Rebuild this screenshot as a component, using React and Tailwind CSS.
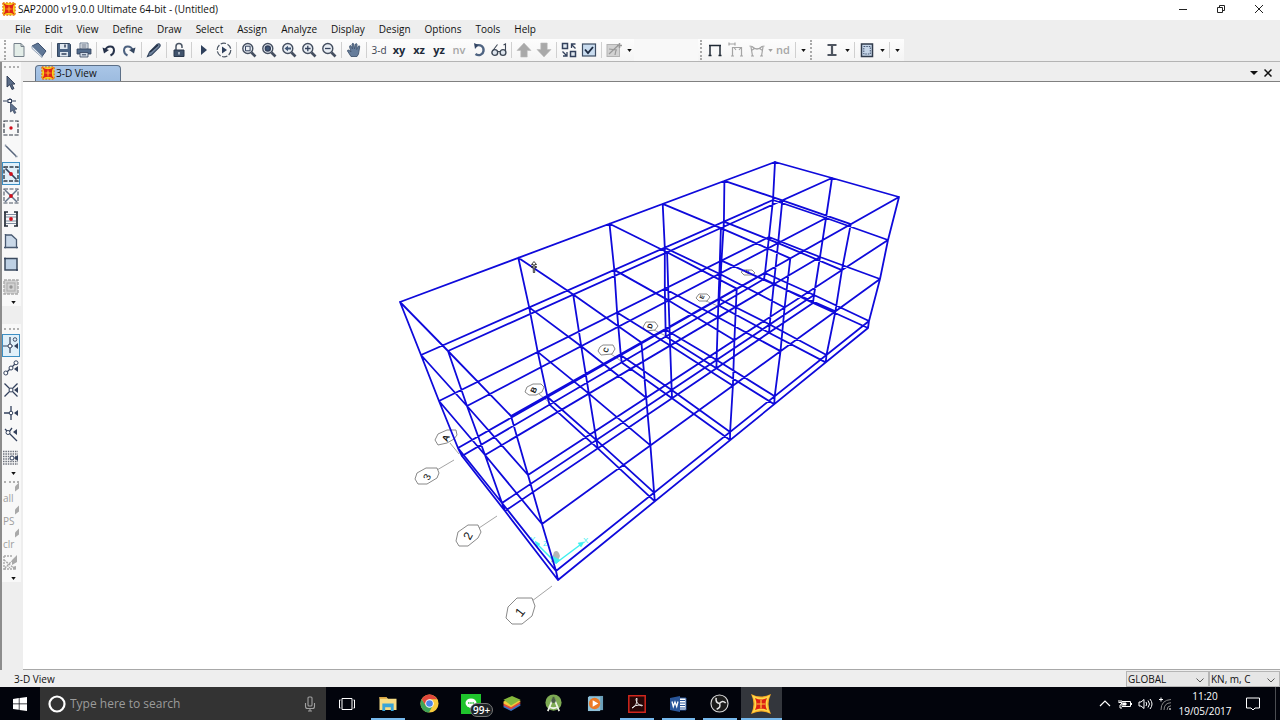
import React from "react";

const INK = "#33415c";

/* ---------- logos and icons ---------- */

function Logo({ className = "size-4" }) {
  return (
    <svg viewBox="0 0 16 16" className={className} aria-hidden="true">
      <rect x="1" y="1" width="14" height="14" fill="#f6d21c" />
      <path d="M1 1h14v14H1z" fill="none" stroke="#e8701a" strokeWidth="1.4" strokeDasharray="2 1.6" />
      <path d="M1.500 1.500Q8 6 14.500 1.500Q10 8 14.500 14.500Q8 10 1.500 14.500Q6 8 1.500 1.500Z" fill="#e02318" />
      <path d="M8 5v6M5 8h6" stroke="#ffb020" strokeWidth="1.300" />
    </svg>
  );
}

function BigLogo() {
  return (
    <svg viewBox="0 0 20 20" className="size-5" aria-hidden="true">
      <path d="M0 0Q10 5 20 0Q15 10 20 20Q10 15 0 20Q5 10 0 0Z" fill="#f7a823" />
      <path d="M1 1Q10 6.500 19 1Q13.500 10 19 19Q10 13.500 1 19Q6.500 10 1 1Z" fill="#ffd84a" />
      <path d="M4 4Q10 7 16 4Q13 10 16 16Q10 13 4 16Q7 10 4 4Z" fill="#dc2014" />
      <path d="M10 6v8M6 10h8" stroke="#ffc53a" strokeWidth="1.200" />
    </svg>
  );
}

function Svg({ children, size = 16 }) {
  return (
    <svg viewBox="0 0 16 16" width={size} height={size} className="shrink-0" fill="none" stroke={INK} strokeWidth="1.400" aria-hidden="true">
      {children}
    </svg>
  );
}

function Magnifier({ children }) {
  return (
    <Svg>
      <circle cx="6.800" cy="6.500" r="5" fill="#e8edf3" stroke="#454f60" />
      <path d="M10.500 10.500L14.500 14.500" strokeWidth="2.600" stroke="#454f60" />
      {children}
    </Svg>
  );
}

const Word = ({ children, cls }) => (
  <span className={cls}>{children}</span>
);

const Icons = {
  newFile: (
    <Svg><path d="M3 1.500h7l3 3v10H3z" fill="#e3ede8" stroke="#75808a" strokeWidth="1" /><path d="M10 1.500v3h3" stroke="#75808a" strokeWidth="1" /></Svg>
  ),
  open: (
    <Svg><path d="M1 4l6-3 8 8-4 5.500z" fill="#5f7796" stroke="#3d5170" strokeWidth="1" /><path d="M1 4l10 10v1.500L1 6.500z" fill="#e8eef5" stroke="#7f92aa" strokeWidth=".8" /></Svg>
  ),
  save: (
    <Svg><path d="M1.500 1.500h12l1 1v12h-13z" fill="#4a6384" stroke="#34475f" strokeWidth="1" /><path d="M4 2h7.500v5H4zM4 10h8v4.500H4z" fill="#dfe7ef" stroke="none" /><path d="M9 2.500v3M5.500 12h5" strokeWidth="1.500" /></Svg>
  ),
  print: (
    <Svg><path d="M4 1h8v6H4z" fill="#eef2f6" stroke="#6c7c90" strokeWidth="1" /><path d="M5.500 3h5M5.500 5h5" strokeWidth=".8" /><path d="M1 7h14v5H1z" fill="#526b8b" strokeWidth=".8" /><path d="M4 10.500h8v4.500H4z" fill="#cfd9e4" strokeWidth=".8" /><path d="M6 12.800h4" strokeWidth="1" /></Svg>
  ),
  undo: (
    <Svg><path d="M4 8.500C6 3 13 3 13 8.500c0 2.500-1.500 4-3.500 5" stroke="#26324a" strokeWidth="2" /><path d="M1.500 5.500l1.500 6 5-3.500z" fill="#26324a" stroke="none" /></Svg>
  ),
  redo: (
    <Svg><path d="M12 8.500C10 3 3 3 3 8.500c0 2.500 1.500 4 3.500 5" stroke="#4c617f" strokeWidth="2" /><path d="M14.500 5.500l-1.500 6-5-3.500z" fill="#34465f" stroke="none" /></Svg>
  ),
  pencil: (
    <Svg><path d="M1.500 14.500l2-4.500L11 2.500q2-1.500 3 0 .8 1.200-.8 2.800L5.500 13z" fill="#71849e" stroke="#34465f" strokeWidth="1.100" /><path d="M4 10l8-7" stroke="#202c40" strokeWidth="1.200" /></Svg>
  ),
  lock: (
    <Svg><path d="M5 8V4.500a3 3 0 0 1 6 0V6" stroke="#4b5665" strokeWidth="1.500" /><path d="M3 8h10v6.500H3z" fill="#41536c" stroke="#2b394d" strokeWidth="1" /><path d="M8 10v2.500" stroke="#d5dde8" /></Svg>
  ),
  play: <Svg><path d="M5 3l6 5-6 5z" fill="#2f405c" stroke="none" /></Svg>,
  runAll: (
    <Svg><circle cx="8" cy="8" r="6.800" strokeDasharray="5.500 1.600" stroke="#4c5664" strokeWidth="1.200" /><path d="M6 4.500l5 3.500-5 3.500z" fill="#2f405c" stroke="none" /></Svg>
  ),
  zoomBox: <Magnifier><path d="M4.500 4.200h4.600v4.600H4.500z" strokeWidth="1" /></Magnifier>,
  zoomFull: <Magnifier><circle cx="6.800" cy="6.500" r="2.500" fill="#3f5676" /></Magnifier>,
  zoomPrev: <Magnifier><path d="M3.500 6.500L7 3.700v1.800h3v2H7v1.800z" fill="#3f5676" stroke="none" /></Magnifier>,
  zoomIn: <Magnifier><path d="M4 6.500h5.600M6.800 3.700v5.600" strokeWidth="1.300" /></Magnifier>,
  zoomOut: <Magnifier><path d="M4 6.500h5.600" strokeWidth="1.300" /></Magnifier>,
  hand: (
    <Svg><path d="M5 14.500L1.500 9q0-1.500 1.500-.8L5 10 3.500 4.500q.3-1.500 1.500-.5L6.500 7 6 2q1-1.500 1.800 0L8.500 7 9.500 2q1.200-1 1.500.5L10.700 7.500 12.500 4q1.300-.6 1.200.8L12.500 12l-1.500 2.500z" fill="#667d9b" stroke="#43566f" strokeWidth=".9" /></Svg>
  ),
  rotate: (
    <Svg><path d="M5 3.500C10 2 13 5 12.500 9c-.5 3.500-4.500 5.500-8 3" stroke="#4f6482" strokeWidth="2.400" /><path d="M3 1l4.500 2-3.500 4z" fill="#334664" stroke="none" /></Svg>
  ),
  glasses: (
    <Svg><circle cx="3.800" cy="10.500" r="2.900" fill="#dfe6ee" stroke="#3e4856" /><circle cx="12" cy="10.500" r="2.900" fill="#dfe6ee" stroke="#3e4856" /><path d="M6.500 9.500h3M1.500 9L6.500 2.500M14.500 9V2l-2 1" stroke="#3e4856" strokeWidth="1.100" /></Svg>
  ),
  up: <Svg><path d="M8 1l7 7.500h-3.800V15H4.800V8.500H1z" fill="#a9a9a9" stroke="#b8b8b8" strokeWidth=".6" /></Svg>,
  down: <Svg><path d="M8 15L1 7.500h3.800V1h6.400v6.500H15z" fill="#a9a9a9" stroke="#b8b8b8" strokeWidth=".6" /></Svg>,
  shrink: (
    <Svg><path d="M1.500 1.500h5v5h-5zM9.500 9.500h5v5h-5z" fill="#dfe7ef" strokeWidth="1.500" /><path d="M14.500 6.500l-4-4M10.500 6V2H14.500M1.500 9.500l4 4M6 10v4H2" strokeWidth="1.300" /></Svg>
  ),
  checked: (
    <Svg><rect x="1.500" y="2" width="13" height="12" fill="#c9dcef" stroke="#3d4d63" strokeWidth="1.200" /><path d="M4 7.500l3 3.500 5-6" stroke="#1e2b42" strokeWidth="1.900" /></Svg>
  ),
  named: (
    <Svg><rect x="1" y="2.500" width="12.500" height="12" fill="#d2d2d2" stroke="#b3b3b3" strokeWidth="1" /><path d="M3 12l9-8.500M3 7l8 1M9 13l1-5" stroke="#989898" strokeWidth="1.200" /><path d="M13.500 1v5M11 3.500h5" stroke="#989898" strokeWidth="1.500" /></Svg>
  ),
  frame: <Svg><path d="M3 13.500V3.500h10v10M1.500 13.500h3M11.500 13.500h3M2 3.500h12" stroke="#202a36" strokeWidth="1.500" /></Svg>,
  loads: <Svg><path d="M4.500 14V5.500h9V14M3 14h3M12 14h3M1 2h6M1 .5v3M7 .5v3M8 8l-2-2.500M11 8l2-2.500" stroke="#a4a4a4" strokeWidth="1.200" /></Svg>,
  bend: <Svg><path d="M3.500 14L2 5M12.500 14L14 5M2 14h3M11 14h3M.5 4l2.500.5q5 5 10 0l2.500-.5M2.500 8.500L6 6M13.500 8.500L10 6" stroke="#a4a4a4" strokeWidth="1.200" /></Svg>,
  section: <Svg><path d="M3.500 3h9M3.500 13h9M8 3v10" stroke="#4e5560" strokeWidth="2.200" /></Svg>,
  area: <Svg><rect x="2.500" y="2" width="11" height="12.500" fill="#c5d5e8" stroke="#303b4b" strokeWidth="1.500" /><rect x="4.800" y="4.500" width="6.500" height="7.500" stroke="#465874" strokeWidth="1" strokeDasharray="1.500 1" /></Svg>,
  arrow: <Svg><path d="M4 1v11l2.800-2.300L9 14.500l2-1-2.300-4.300L12 9z" fill="#5c6d88" stroke="#2b3850" strokeWidth=".9" /></Svg>,
  reshape: <Svg><path d="M0 3h13M7 0v5" strokeWidth="1.100" /><rect x="5" y="1.500" width="3.500" height="3" fill="#fff" strokeWidth="1" /><path d="M7.500 5v9l2.200-1.800 1.700 3.300 1.500-.8-1.700-3.200 2.800-.4z" fill="#60738f" strokeWidth=".7" /></Svg>,
  joint: <Svg><rect x="1" y="1" width="14" height="14" strokeDasharray="4 1.500" stroke="#333b46" strokeWidth="1.200" /><circle cx="8" cy="8" r="1.700" fill="#d0101d" stroke="none" /></Svg>,
  line: <Svg><path d="M3 3l10 10" stroke="#56647a" strokeWidth="1.500" /><path d="M2.500 1.500v2M12 13.500h2.500" stroke="#8a95a5" /></Svg>,
  quickLine: <Svg><rect x="1" y="1" width="14" height="14" strokeDasharray="4 1.500" stroke="#333b46" strokeWidth="1.400" /><path d="M2.500 2.500l11 11" strokeWidth="1.700" /><circle cx="8" cy="8" r="1.900" fill="#d0101d" stroke="none" /></Svg>,
  brace: <Svg><rect x="1" y="1" width="14" height="14" strokeDasharray="4 1.500" stroke="#4b5563" strokeWidth="1.100" /><path d="M2 2l12 12M14 2L2 14" stroke="#65748a" strokeWidth="1.500" /><circle cx="8" cy="8" r="1.900" fill="#d0101d" stroke="none" /></Svg>,
  secondary: <Svg><path d="M2 1v14M14 1v14M1 1h4M11 1h4M1 15h4M11 15h4" stroke="#252d38" strokeWidth="1.700" /><path d="M3 3.500h10M3 6h10M3 10h10M3 12.500h10" stroke="#7e8da0" strokeWidth="1.100" /><circle cx="8" cy="8" r="1.900" fill="#d0101d" stroke="none" /></Svg>,
  poly: <Svg><path d="M2.500 2h6l5 4.500v8h-11z" fill="#c9d8e8" stroke="#485970" strokeWidth="1.300" /><path d="M1 14.500h2M13 14.500h2M2.500 1v1" stroke="#485970" /></Svg>,
  rect: <Svg><rect x="2" y="2.500" width="12" height="11.500" fill="#bdd0e4" stroke="#3a495e" strokeWidth="1.500" /><path d="M1 2.500h2M13 14h2" /></Svg>,
  quickArea: <Svg><rect x="1" y="1" width="14" height="14" fill="#d2d2d2" stroke="#aaa" strokeDasharray="3 1" /><rect x="4" y="4" width="8" height="8" stroke="#aaa" strokeWidth="1" /><circle cx="8" cy="8" r="1.700" fill="#949494" stroke="none" /></Svg>,
  snapPoint: <Svg><path d="M7 0v16M0 9h10" strokeWidth="1.200" /><circle cx="12" cy="2.500" r="1.800" strokeWidth=".9" /><circle cx="7" cy="9" r="2" fill="#fff" strokeWidth="1" /><path d="M15 6v6l-4-3z" fill={INK} stroke="none" /></Svg>,
  snapMid: <Svg><path d="M3 13L13 3" strokeWidth="1.200" /><circle cx="2.800" cy="13" r="2" fill="#fff" strokeWidth="1" /><circle cx="8" cy="8" r="2" fill="#fff" strokeWidth="1" /><circle cx="13" cy="2.800" r="2" fill="#fff" strokeWidth="1" /><path d="M15 6v6l-4-3z" fill={INK} stroke="none" /></Svg>,
  snapCross: <Svg><path d="M1.500 1.500l13 13M14.500 1.500l-13 13" strokeWidth="1.300" /><circle cx="8" cy="8" r="2" fill="#fff" strokeWidth="1" /><path d="M15 5v6l-4-3z" fill={INK} stroke="none" /></Svg>,
  snapPerp: <Svg><path d="M8 1v14M1 8h9" strokeWidth="1.300" /><circle cx="8" cy="8" r="1.800" fill="#fff" strokeWidth="1" /><path d="M15 5v6l-4-3z" fill={INK} stroke="none" /></Svg>,
  snapLine: <Svg><path d="M2 2l12 12M6 5l3-4" strokeWidth="1.300" /><circle cx="5" cy="5.500" r="2" fill="#fff" strokeWidth="1" /><path d="M14 2v6l-4-3z" fill={INK} stroke="none" /></Svg>,
  snapGrid: <Svg><path d="M0 1.500h15M0 4h15M0 6.500h15M0 9h15M0 11.500h15M0 14h15" stroke="#6d727c" strokeWidth="1.400" strokeDasharray="1.500 .9" /><circle cx="9" cy="8" r="2" fill="#fff" strokeWidth="1" /><path d="M15 5v6l-4-3z" fill={INK} stroke="none" /></Svg>,
};

function Brush({ text }) {
  return (
    <span className="relative block h-4 w-4 text-left text-[10px] leading-6 text-[#9d9d9d]">
      {text}
      <svg viewBox="0 0 6 10" className="absolute -right-px -top-1 h-[11px] w-[6px]" aria-hidden="true">
        <path d="M1 4l4-4v6L1 9z" fill="#a9a9a9" />
      </svg>
    </span>
  );
}
const dashBrush = (
  <Svg><path d="M1 1h8M1 1v14M1 14h11M1 5l11 9M2 13L9 6M4 10l3 3" stroke="#a9a9a9" strokeDasharray="2 1" /><path d="M9 5l5-5v7l-5 3zM9 12l4-1v4z" fill="#a9a9a9" stroke="none" /></Svg>
);

/* ---------- tool bar parts ---------- */

function Tool({ label, children, width = "w-5" }) {
  return (
    <button type="button" aria-label={label} className={`${width} flex h-5 shrink-0 items-center justify-center`}>
      {children}
    </button>
  );
}
const Sep = () => <span className="mx-0.5 h-4 w-px shrink-0 bg-[#d0d0d0]" />;
function Caret({ label, dim, width = "w-2.5" }) {
  return (
    <button type="button" aria-label={label} className={`${width} flex h-5 shrink-0 items-center justify-center`}>
      <svg viewBox="0 0 6 4" className="h-[3px] w-[5px]" aria-hidden="true"><path d="M0 0h6L3 4z" fill={dim ? "#a0a0a0" : "#111"} /></svg>
    </button>
  );
}
const Grip = () => <span className="mx-0.5 h-5 w-0 shrink-0 border-l-2 border-dotted border-[#a9a9a9]" />;

const mainTools = [
  ["New model", Icons.newFile], ["Open", Icons.open], null,
  ["Save", Icons.save], ["Print", Icons.print], null,
  ["Undo", Icons.undo], ["Redo", Icons.redo], null,
  ["Refresh window", Icons.pencil], null,
  ["Lock model", Icons.lock], null,
  ["Run analysis", Icons.play], ["Model alive", Icons.runAll], null,
  ["Rubber band zoom", Icons.zoomBox], ["Restore full view", Icons.zoomFull], ["Previous zoom", Icons.zoomPrev],
  ["Zoom in", Icons.zoomIn], ["Zoom out", Icons.zoomOut], null,
  ["Pan", Icons.hand], null,
  ["3-d view", <Word cls="text-[10px] text-[#3c4450]">3-d</Word>],
  ["xy view", <Word cls="text-[11px] font-bold text-[#202a3a]">xy</Word>],
  ["xz view", <Word cls="text-[11px] font-bold text-[#202a3a]">xz</Word>],
  ["yz view", <Word cls="text-[11px] font-bold text-[#202a3a]">yz</Word>],
  ["nv view", <Word cls="text-[11px] font-semibold text-[#a6a6a6]">nv</Word>],
  ["Rotate 3D view", Icons.rotate], ["Perspective toggle", Icons.glasses], null,
  ["Move up", Icons.up], ["Move down", Icons.down], null,
  ["Object shrink", Icons.shrink], ["Display options", Icons.checked], null,
  ["Named display", Icons.named],
];

const drawTools = [
  ["Select", Icons.arrow], ["Reshape", Icons.reshape], ["Draw joint", Icons.joint], ["Draw frame", Icons.line],
  ["Quick draw frame", Icons.quickLine], ["Quick draw braces", Icons.brace], ["Quick draw secondary beams", Icons.secondary],
  ["Draw poly area", Icons.poly], ["Draw rectangular area", Icons.rect], ["Quick draw area", Icons.quickArea],
];
const snapTools = [
  ["Snap to points", Icons.snapPoint], ["Snap to midpoints", Icons.snapMid], ["Snap to intersections", Icons.snapCross],
  ["Snap perpendicular", Icons.snapPerp], ["Snap to lines", Icons.snapLine], ["Snap to grid", Icons.snapGrid],
];
const selectTools = [
  ["Select all", <Brush text="all" />], ["Previous selection", <Brush text="PS" />],
  ["Clear selection", <Brush text="clr" />], ["Intersecting line", dashBrush],
];

function SideGroup({ tools, active, height, pad = "pt-1" }) {
  return (
    <div className="flex flex-col bg-[#f8f8f8]">
      <span className="mx-0.5 mt-1 border-t-2 border-dotted border-[#b0b0b0]" />
      <div className={pad}>
        <div className={`${height} flex flex-col`}>
          {tools.map(([label, icon], i) => (
            <button
              key={label}
              type="button"
              aria-label={label}
              className={`flex w-[18px] flex-1 items-center justify-center border ${i === active ? "border-[#3c8fc4] bg-[#e0f0fa]" : "border-transparent"}`}
            >
              {icon}
            </button>
          ))}
        </div>
      </div>
      <button type="button" aria-label="More tools" className="flex h-2 items-center justify-center pl-1">
        <svg viewBox="0 0 6 4" className="h-[3px] w-[5px]" aria-hidden="true"><path d="M0 0h6L3 4z" fill="#111" /></svg>
      </button>
    </div>
  );
}

/* ---------- structural model ---------- */

// Screen positions of both end frames: [row][level], from base to roof.
const NEAR = [
  [[558, 580], [556, 571], [542, 524], [528, 475], [511, 416]],
  [[505, 511], [502, 503], [485, 455], [467, 406], [448, 351]],
  [[462, 456], [458, 448], [439, 401], [421, 355], [400, 302]],
];
const FAR = [
  [[868, 328], [869, 321], [880, 279], [888, 240], [899, 197]],
  [[813, 303], [814, 295], [820, 257], [826, 218], [832, 178]],
  [[764, 279], [765, 273], [769, 237], [773, 200], [775, 162]],
];
const DEPTH = [1, 0.95, 0.9];
const HEIGHT = [0, 0.05, 0.35, 0.67, 1];
const BAYS = [0, 0.454, 1.247, 2.305, 6.32, Infinity];

function node(bay, row, level) {
  const a = NEAR[row][level];
  const b = FAR[row][level];
  const o = BAYS[bay] * (DEPTH[row] + 0.115 * HEIGHT[level]);
  const s = o === Infinity ? 1 : o / (1 + o);
  return [a[0] + (b[0] - a[0]) * s, a[1] + (b[1] - a[1]) * s];
}

function framePath() {
  const parts = [];
  const seg = (p, q) => parts.push(`M${p[0].toFixed(1)} ${p[1].toFixed(1)}L${q[0].toFixed(1)} ${q[1].toFixed(1)}`);
  for (let r = 0; r < 3; r++) {
    for (let l = 0; l < 5; l++) seg(node(0, r, l), node(5, r, l));
  }
  for (let b = 0; b < 6; b++) {
    for (let l = 0; l < 5; l++) {
      seg(node(b, 0, l), node(b, 1, l));
      seg(node(b, 1, l), node(b, 2, l));
    }
    for (let r = 0; r < 3; r++) {
      for (let l = 0; l < 4; l++) seg(node(b, r, l), node(b, r, l + 1));
    }
  }
  return parts.join("");
}
const FRAME = framePath();

const BUBBLES = [
  { t: "1", x: 520, y: 612, r: -52, f: 13, p: "517,598 532,598 535,606 532,616 522,624 512,624 506,618 508,607", l: "M532 601L552 586" },
  { t: "2", x: 468, y: 536, r: -62, f: 12, p: "468,525 478,525 481,532 478,538 468,546 459,546 456,541 458,532", l: "M479 528L497 516" },
  { t: "3", x: 427, y: 477, r: -65, f: 10, p: "426,468 437,468 439,473 437,478 427,484 418,484 415,479 417,473", l: "M437 470L454 460" },
  { t: "A", x: 446, y: 438, r: -65, f: 9, p: "447,430 456,430 457,435 454,439 447,443 438,445 435,440 438,434", l: "M450 443L459 454" },
  { t: "B", x: 534, y: 390, r: -65, f: 8, p: "533,384 541,384 544,387 542,392 536,395 529,395 525,392 527,387", l: "M539 394L550 403" },
  { t: "C", x: 606, y: 350, r: -68, f: 7, p: "603,345 613,345 615,349 612,354 601,355 598,351 600,347", l: "M611 354L621 361" },
  { t: "D", x: 650, y: 326, r: -70, f: 7, p: "646,322 655,322 658,326 655,330 646,331 643,327", l: "M654 330L666 336" },
  { t: "E", x: 702, y: 297, r: -70, f: 6, p: "699,294 707,294 710,297 707,301 699,301 696,298", l: "M706 301L718 306" },
  { t: "F", x: 748, y: 272, r: -70, f: 6, p: "744,270 752,270 755,273 752,275 744,275 741,272", l: "M752 275L764 280" },
];

function ModelView() {
  return (
    <svg viewBox="23 82 1257 587" className="block h-full w-full" role="img" aria-label="3-D frame model" fontFamily="'Liberation Sans', sans-serif">
      {BUBBLES.map((b) => (
        <g key={b.t}>
          <path d={b.l} stroke="#9a9a9a" strokeWidth=".9" />
          <polygon points={b.p} fill="#fff" stroke="#7c7c7c" strokeWidth=".9" />
          <text x={b.x} y={b.y} fontSize={b.f} fontWeight={b.f < 10 ? 700 : 400} fill="#111" textAnchor="middle" dominantBaseline="central" transform={`rotate(${b.r} ${b.x} ${b.y})`}>
            {b.t}
          </text>
        </g>
      ))}
      <path d="M551 562l3-10q4-3 6 4l-3 7z" fill="#b5b5b5" />
      <g stroke="#3ff0f0" strokeWidth="1.500" fill="#3ff0f0">
        <path d="M556 563L580 545M556 563L537 544" fill="none" />
        <path d="M584 542l-6 1 3 4zM535 541l2 6 3-3zM552 556l8 4-4 4z" strokeWidth=".5" />
      </g>
      <g fontSize="8" fill="#3ff0f0">
        <text x="583" y="543">X</text>
        <text x="530" y="542">Y</text>
        <text x="543" y="546">Z</text>
      </g>
      <path d={FRAME} stroke="#0f0adb" strokeWidth="1.800" fill="none" strokeLinecap="round" />
      <path d="M534 261.500l2.500 3h-1.800v2h1.800v1h-1.800v5h-1.400v-5h-1.800v-1h1.800v-2h-1.800z" fill="#fff" stroke="#111" strokeWidth=".8" />
    </svg>
  );
}

/* ---------- task bar ---------- */

const apps = [
  { name: "File Explorer", run: true, icon: (
    <svg viewBox="0 0 20 18" className="h-[17px] w-5"><path d="M1 2h7l2 2h9v12H1z" fill="#f8dd85" /><path d="M1 2h7l1 2H1z" fill="#d9a441" /><path d="M4 9h12v8h-3v-4H7v4H4z" fill="#3aa5d8" /></svg>) },
  { name: "Chrome", icon: (
    <svg viewBox="0 0 20 20" className="size-[19px]"><circle cx="10" cy="10" r="9.500" fill="#f7cb3c" /><path d="M1.800 5.200A9.500 9.500 0 0 0 9.500 19.500L13.500 12 10 10 6 12z" fill="#3ea457" /><path d="M1.800 5.200A9.500 9.500 0 0 1 18.200 5.500H10L6 12z" fill="#e0483c" /><circle cx="10" cy="10" r="4.500" fill="#fff" /><circle cx="10" cy="10" r="3.500" fill="#4b86e8" /></svg>) },
  { name: "LINE", badge: "99+", icon: (
    <svg viewBox="0 0 20 20" className="size-5"><path d="M0 0h20v20H0z" fill="#1fc42c" /><ellipse cx="10" cy="9" rx="5.500" ry="4.500" fill="#fff" /><path d="M8 13l3 3 1-4z" fill="#fff" /><path d="M7 9h6" stroke="#1fc42c" strokeWidth="1.500" strokeDasharray="1.500 .7" /></svg>) },
  { name: "BlueStacks", icon: (
    <svg viewBox="0 0 20 18" className="h-[17px] w-5"><path d="M1 11l9-4 9 3v1l-10 6-8-4z" fill="#3b6fc4" /><path d="M1 9l9-4 9 3v1l-10 6-8-4z" fill="#e2483a" /><path d="M1 7l9-4 9 3v1l-10 6-8-4z" fill="#f2c93b" /><path d="M1 5l9-4 9 4-10 6z" fill="#85b83c" /></svg>) },
  { name: "Android Studio", icon: (
    <svg viewBox="0 0 20 20" className="size-[19px]"><circle cx="10" cy="9" r="8.500" fill="#7eab54" /><path d="M9 6L4 18M11 6l5 12M5 13q5 4 10 0" stroke="#eef3e8" strokeWidth="1.800" fill="none" /><circle cx="10" cy="7" r="2.500" fill="#4b5e46" /><path d="M10 3v3" stroke="#4b5e46" strokeWidth="2" /></svg>) },
  { name: "Media Player", icon: (
    <svg viewBox="0 0 18 18" className="size-[17px]"><path d="M2 1h15v15H2z" fill="#6b9fb9" /><path d="M1 2h13v15H1z" fill="#8fc0d7" /><circle cx="8" cy="9" r="6" fill="#ec7a25" /><path d="M6 5.500l6 3.500-6 3.500z" fill="#fff" /></svg>) },
  { name: "Acrobat Reader", run: true, icon: (
    <svg viewBox="0 0 18 18" className="size-[18px]"><path d="M.8.8h16.400v16.400H.8z" fill="#260707" stroke="#d0261d" strokeWidth="1.500" /><path d="M4 13q5-2 5-9 0-2-1 0 0 5 6 7 2-1-3-1-4 0-7 3z" fill="none" stroke="#eee" strokeWidth="1" /></svg>) },
  { name: "Word", run: true, icon: (
    <svg viewBox="0 0 18 18" className="size-[18px]"><path d="M9 3h8v12H9z" fill="#fff" stroke="#2a5699" strokeWidth="1" /><path d="M11 5.500h5M11 8h5M11 10.500h5M11 13h5" stroke="#2a5699" /><path d="M1 3l10-2v16L1 15z" fill="#2a5699" /><path d="M3 6.500l1.300 5L6 7l1.700 4.500L9 6.500" fill="none" stroke="#fff" strokeWidth="1.300" /></svg>) },
  { name: "OBS Studio", run: true, icon: (
    <svg viewBox="0 0 20 20" className="size-[19px]"><circle cx="10" cy="10" r="9" fill="#1b1b1b" stroke="#d8d8d8" strokeWidth="1.200" /><path d="M10 10Q5.500 9 6.500 4M10 10q3-4 6.500-.5M10 10q2 4-3 6" fill="none" stroke="#e5e5e5" strokeWidth="1.600" /></svg>) },
  { name: "SAP2000", run: true, active: true, icon: <BigLogo /> },
];

const ChevronDown = () => (
  <svg viewBox="0 0 8 5" className="pointer-events-none absolute right-1 top-1.5 h-[5px] w-2" aria-hidden="true">
    <path d="M.5.5L4 4 7.500.5" fill="none" stroke="#555" />
  </svg>
);

function StatusSelect({ label, value, width }) {
  return (
    <div className={`${width} relative border border-[#b5b5b5] bg-[#e6e6e6]`}>
      <select aria-label={label} className="block h-3.5 w-full appearance-none bg-transparent pl-px text-[10px] leading-[14px] text-[#111]" defaultValue={value}>
        <option>{value}</option>
      </select>
      <ChevronDown />
    </div>
  );
}

const menus = ["File", "Edit", "View", "Define", "Draw", "Select", "Assign", "Analyze", "Display", "Design", "Options", "Tools", "Help"];

export default function App() {
  return (
    <div className="flex h-screen flex-col overflow-hidden bg-[#eeeeee] text-[10px] text-[#111] [font-family:'Open_Sans','Noto_Sans',sans-serif]">
      <header className="flex h-5 shrink-0 items-center bg-white pb-0.5 pl-0.5 pr-0.5">
        <Logo className="size-3.5" />
        <h1 className="ml-0.5 whitespace-nowrap text-[10px] leading-4">SAP2000 v19.0.0 Ultimate 64-bit - (Untitled)</h1>
        <div className="ml-auto flex">
          <button type="button" aria-label="Minimize" className="flex h-4 w-[38px] items-center justify-center">
            <svg viewBox="0 0 8 8" className="size-2"><path d="M0 4.500h8" stroke="#222" /></svg>
          </button>
          <button type="button" aria-label="Restore" className="flex h-4 w-[38px] items-center justify-center">
            <svg viewBox="0 0 8 8" className="size-2" fill="none" stroke="#222"><path d="M.5 2.500h5v5h-5zM2.500 2.500v-2h5v5h-2" /></svg>
          </button>
          <button type="button" aria-label="Close" className="flex h-4 w-[38px] items-center justify-center">
            <svg viewBox="0 0 8 8" className="size-2" stroke="#222"><path d="M0 0l8 8M8 0L0 8" /></svg>
          </button>
        </div>
      </header>

      <nav className="flex h-[19px] shrink-0 items-center gap-3.5 pb-0.5 pl-[15px]">
        {menus.map((m) => (
          <button key={m} type="button" className="text-[10px] leading-4">{m}</button>
        ))}
      </nav>

      <div className="flex h-[23px] shrink-0 items-center border-b border-[#b4b4b4]">
        <div className="flex h-full w-[634px] shrink-0 items-center bg-gradient-to-b from-[#fdfdfd] to-[#f4f4f4] pl-0.5">
          <Grip />
          <span className="w-px" />
          {mainTools.map((t, i) => (t ? <Tool key={t[0]} label={t[0]}>{t[1]}</Tool> : <Sep key={i} />))}
          <Caret label="More display options" />
        </div>
        <div className="h-full w-16 shrink-0 bg-[#f8f8f8]" />
        <div className="flex h-full shrink-0 items-center bg-gradient-to-b from-[#fdfdfd] to-[#f4f4f4] pr-0.5">
          <Grip />
          <Tool label="Undeformed shape" width="w-[21px]">{Icons.frame}</Tool>
          <Tool label="Show loads" width="w-[21px]">{Icons.loads}</Tool>
          <Tool label="Deformed shape" width="w-[21px]">{Icons.bend}</Tool>
          <Caret label="Forces" dim width="w-1.5" />
          <Tool label="Named display nd"><span className="text-[11px] font-semibold text-[#a6a6a6]">nd</span></Tool>
          <Sep />
          <Caret label="More results" />
          <Grip />
          <span className="w-2" />
          <Tool label="Frame section">{Icons.section}</Tool>
          <Caret label="Frame sections" />
          <Sep />
          <Tool label="Area section">{Icons.area}</Tool>
          <Caret label="Area sections" />
          <Sep />
          <Caret label="More sections" />
        </div>
      </div>

      <main className="flex min-h-0 flex-1">
        <aside className="flex w-[23px] shrink-0 flex-col gap-[18px] border-l-2 border-[#8c8c8c] pr-0.5">
          <SideGroup tools={drawTools} active={4} height="h-[226px]" />
          <div className="flex flex-col">
            <SideGroup tools={snapTools} active={0} height="h-[135px]" />
            <SideGroup tools={selectTools} active={-1} height="h-[91px]" pad="pt-0" />
          </div>
        </aside>
        <section className="flex min-w-0 flex-1 flex-col">
          <div className="flex h-5 shrink-0 items-end border-b border-[#808080] pl-3">
            <button type="button" className="flex h-4 w-[86px] items-center gap-px rounded-t border border-b-0 border-[#5c6f87] bg-gradient-to-b from-[#a9c5e6] to-[#9dbce0] pb-0.5 pl-[5px] text-[10px] leading-3">
              <Logo className="size-3.5" />
              3-D View
            </button>
            <div className="mb-1 ml-auto mr-2 flex items-center gap-1.5">
              <button type="button" aria-label="Window list"><svg viewBox="0 0 8 4" className="h-1 w-2"><path d="M0 0h8L4 4z" fill="#111" /></svg></button>
              <button type="button" aria-label="Close view"><svg viewBox="0 0 8 8" className="size-2"><path d="M.5.5l7 7M7.500.5l-7 7" stroke="#111" strokeWidth="1.500" /></svg></button>
            </div>
          </div>
          <div className="min-h-0 flex-1 border-b border-[#a8a8a8] bg-white">
            <ModelView />
          </div>
        </section>
      </main>

      <footer className="flex h-[17px] shrink-0 items-center pl-3.5">
        <span className="leading-4">3-D View</span>
        <div className="ml-auto flex">
          <StatusSelect label="Coordinate system" value="GLOBAL" width="w-[83px]" />
          <StatusSelect label="Units" value="KN, m, C" width="w-[71px]" />
        </div>
      </footer>

      <div className="flex h-[33px] shrink-0 items-stretch bg-[#02040c] text-white">
        <button type="button" aria-label="Start" className="flex w-10 items-center justify-center">
          <svg viewBox="0 0 14 14" className="size-3.5" fill="#fff"><path d="M0 2l5.800-.9v5.500H0zM6.500 1L14 0v6.600H6.500zM0 7.300h5.800v5.500L0 12zM6.500 7.300H14V14l-7.500-1z" /></svg>
        </button>
        <div className="flex w-[286px] items-center bg-[#333333] pl-2 pr-2.5">
          <svg viewBox="0 0 18 18" className="size-[18px] shrink-0"><circle cx="9" cy="9" r="7.500" fill="none" stroke="#fff" strokeWidth="2.200" /></svg>
          <input type="text" aria-label="Search" placeholder="Type here to search" className="ml-1 min-w-0 flex-1 bg-transparent text-[12px] text-white outline-none placeholder:text-[#9b9b9b]" />
          <svg viewBox="0 0 12 16" className="h-4 w-3 shrink-0" fill="none" stroke="#a0a0a0" strokeWidth="1.100"><rect x="4" y="1" width="4" height="9" rx="1" /><path d="M1.500 7v3.500q0 2 2 2h5q2 0 2-2V7M6 12.500V15M4 15h4" /></svg>
        </div>
        <button type="button" aria-label="Task view" className="flex w-[41px] items-center justify-center">
          <svg viewBox="0 0 16 12" className="h-3 w-4" fill="none" stroke="#fff"><path d="M3 .5h10v11H3zM1.500 2h-1v8h1M14.500 2h1v8h-1" /></svg>
        </button>
        <div className="flex w-[415px]">
          {apps.map((a) => (
            <button
              key={a.name}
              type="button"
              aria-label={a.name}
              className={`relative flex flex-1 items-center justify-center ${a.active ? "bg-[#33363c]" : ""}`}
            >
              {a.icon}
              {a.badge && (
                <span className="absolute left-5 top-4 rounded-full border border-[#777] bg-[#1d2226] px-0.5 text-[10px] font-semibold leading-3">{a.badge}</span>
              )}
              {a.run && <span className={`absolute bottom-0 h-0.5 bg-[#76b9ed] ${a.active ? "inset-x-0" : "inset-x-1"}`} />}
            </button>
          ))}
        </div>
        <div className="ml-auto flex items-center">
          <div className="flex items-center gap-1">
            <button type="button" aria-label="Hidden icons" className="flex w-4 justify-center"><svg viewBox="0 0 12 7" className="h-[7px] w-3" fill="none" stroke="#fff" strokeWidth="1.200"><path d="M1 6l5-5 5 5" /></svg></button>
            <button type="button" aria-label="Battery" className="flex w-4 justify-center"><svg viewBox="0 0 14 10" className="h-2.5 w-3.5" fill="none" stroke="#fff"><path d="M4 2.500h8.500v5H4zM13.500 4v2" /><path d="M5 4h3v2H5z" fill="#fff" /><path d="M1 1v2M3 1v2M.5 3.500h3V5L2 6v3h2" /></svg></button>
            <button type="button" aria-label="Volume" className="flex w-4 justify-center"><svg viewBox="0 0 15 12" className="h-3 w-[15px]" fill="none" stroke="#fff"><path d="M1 4h2l3-2.500v9L3 8H1zM8 4q1.500 2 0 4M10 2.500q3 3.500 0 7M12 1q4 5 0 10" /></svg></button>
            <button type="button" aria-label="Wireless network" className="flex w-4 justify-center"><svg viewBox="0 0 14 14" className="size-3.5" fill="none" stroke="#858585"><path d="M3 13Q3 3 13 2.500M6 13q0-7 7-7.300M9 13q0-4 4-4.300" /><path d="M1 2.500h4M3 .5v4" stroke="#fff" /><circle cx="12" cy="12" r="1" fill="#bbb" stroke="none" /></svg></button>
          </div>
          <div className="w-[64px] text-center text-[10px] leading-[15px]">
            <div>11:20</div>
            <div>19/05/2017</div>
          </div>
          <button type="button" aria-label="Notifications" className="flex w-8 justify-center"><svg viewBox="0 0 14 14" className="size-3.5" fill="none" stroke="#fff"><path d="M.5 1h13v10H9l-2 2-2-2H.5z" /></svg></button>
          <span className="ml-1.5 mr-1 h-[33px] w-px bg-[#4b4d52]" />
        </div>
      </div>
    </div>
  );
}
